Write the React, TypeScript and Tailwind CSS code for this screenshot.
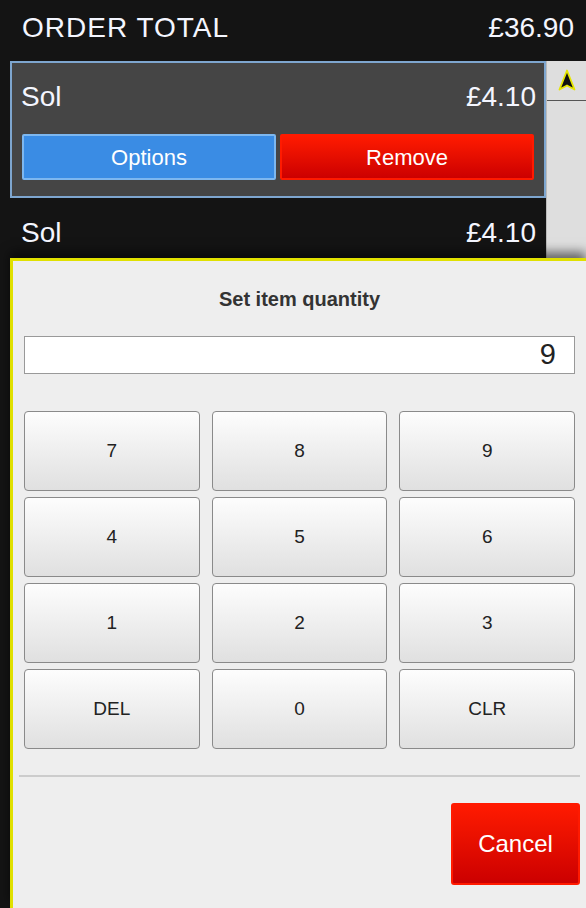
import React from "react";

const keys = ["7", "8", "9", "4", "5", "6", "1", "2", "3", "DEL", "0", "CLR"];

export default function App() {
  return (
    <div
      className="w-[586px] h-[908px] bg-[#141414] overflow-hidden flex flex-col"
      style={{ fontFamily: '"Liberation Sans", Arial, sans-serif' }}
    >
      {/* Header */}
      <div className="h-[61px] shrink-0 flex items-center justify-between pl-[22px] pr-[12px] pb-[6px] text-[28px] text-[#f4f6ff]">
        <span className="tracking-[1px]">ORDER TOTAL</span>
        <span>£36.90</span>
      </div>

      {/* List area */}
      <div className="h-[197px] shrink-0 flex items-stretch overflow-hidden">
        <div className="ml-[10px] w-[536px] shrink-0 flex flex-col">
          <div className="border-2 border-[#7ea6cf] bg-[#454545] h-[137px] shrink-0 flex flex-col">
            <div className="h-[66px] flex items-center justify-between pl-[9px] pr-[8px] pt-[2px] text-[28px] text-[#f4f6ff]">
              <span>Sol</span>
              <span>£4.10</span>
            </div>
            <div className="mt-[5px] flex gap-[4px] pl-[10px] pr-[10px]">
              <div className="w-[254px] h-[46px] rounded-[2px] border-2 border-[#7db7ef] bg-[#3a8ce4] flex items-center justify-center text-[22px] text-white">
                Options
              </div>
              <div className="w-[254px] h-[46px] rounded-[2px] border-2 border-[#ff1a00] bg-gradient-to-b from-[#ff1a00] to-[#cc0000] flex items-center justify-center text-[22px] text-white">
                Remove
              </div>
            </div>
          </div>
          <div className="h-[70px] shrink-0 flex items-center justify-between pl-[11px] pr-[10px] text-[28px] text-[#f4f6ff]">
            <span>Sol</span>
            <span>£4.10</span>
          </div>
        </div>
        <div className="w-[40px] h-[197px] shrink-0 bg-[#dedede] border-l border-[#bbb] flex flex-col">
          <div className="h-[40px] border-b border-[#555] flex items-center justify-center">
            <svg width="18" height="23" viewBox="0 0 18 23">
              <path
                d="M9 1.5 L16.5 20.5 L9 16.5 L1.5 20.5 Z"
                fill="#111"
                stroke="#e6e600"
                strokeWidth="1.8"
                strokeLinejoin="round"
              />
            </svg>
          </div>
        </div>
      </div>

      {/* Dialog */}
      <div className="ml-[10px] flex-1 border-l-[3px] border-t-[3px] border-[#e0e000] bg-[#eeeeee] flex flex-col shadow-[0_-6px_10px_rgba(0,0,0,0.55)] relative">
        <div className="mt-[26px] h-[24px] flex items-center justify-center text-[20px] font-bold text-[#333]">
          Set item quantity
        </div>
        <div className="mt-[25px] mx-[11px] h-[38px] bg-white border border-[#999] flex items-center justify-end pr-[18px] text-[29px] text-[#222]">
          9
        </div>
        <div className="mt-[37px] mx-[11px] grid grid-cols-3 gap-x-[12px] gap-y-[6px]">
          {keys.map((k) => (
            <div
              key={k}
              className="h-[80px] rounded-[4px] border border-[#8a8a8a] bg-gradient-to-b from-[#fdfdfd] to-[#e0e0e0] flex items-center justify-center text-[19px] text-[#222]"
            >
              {k}
            </div>
          ))}
        </div>
        <div className="mt-[26px] mx-[6px] h-[2px] bg-[#cccccc]" />
        <div className="mt-[26px] mr-[6px] flex justify-end">
          <div className="w-[129px] h-[82px] rounded-[3px] border-2 border-[#ff1a00] bg-gradient-to-b from-[#ff1a00] to-[#cc0000] flex items-center justify-center text-[24px] text-white">
            Cancel
          </div>
        </div>
      </div>
    </div>
  );
}
